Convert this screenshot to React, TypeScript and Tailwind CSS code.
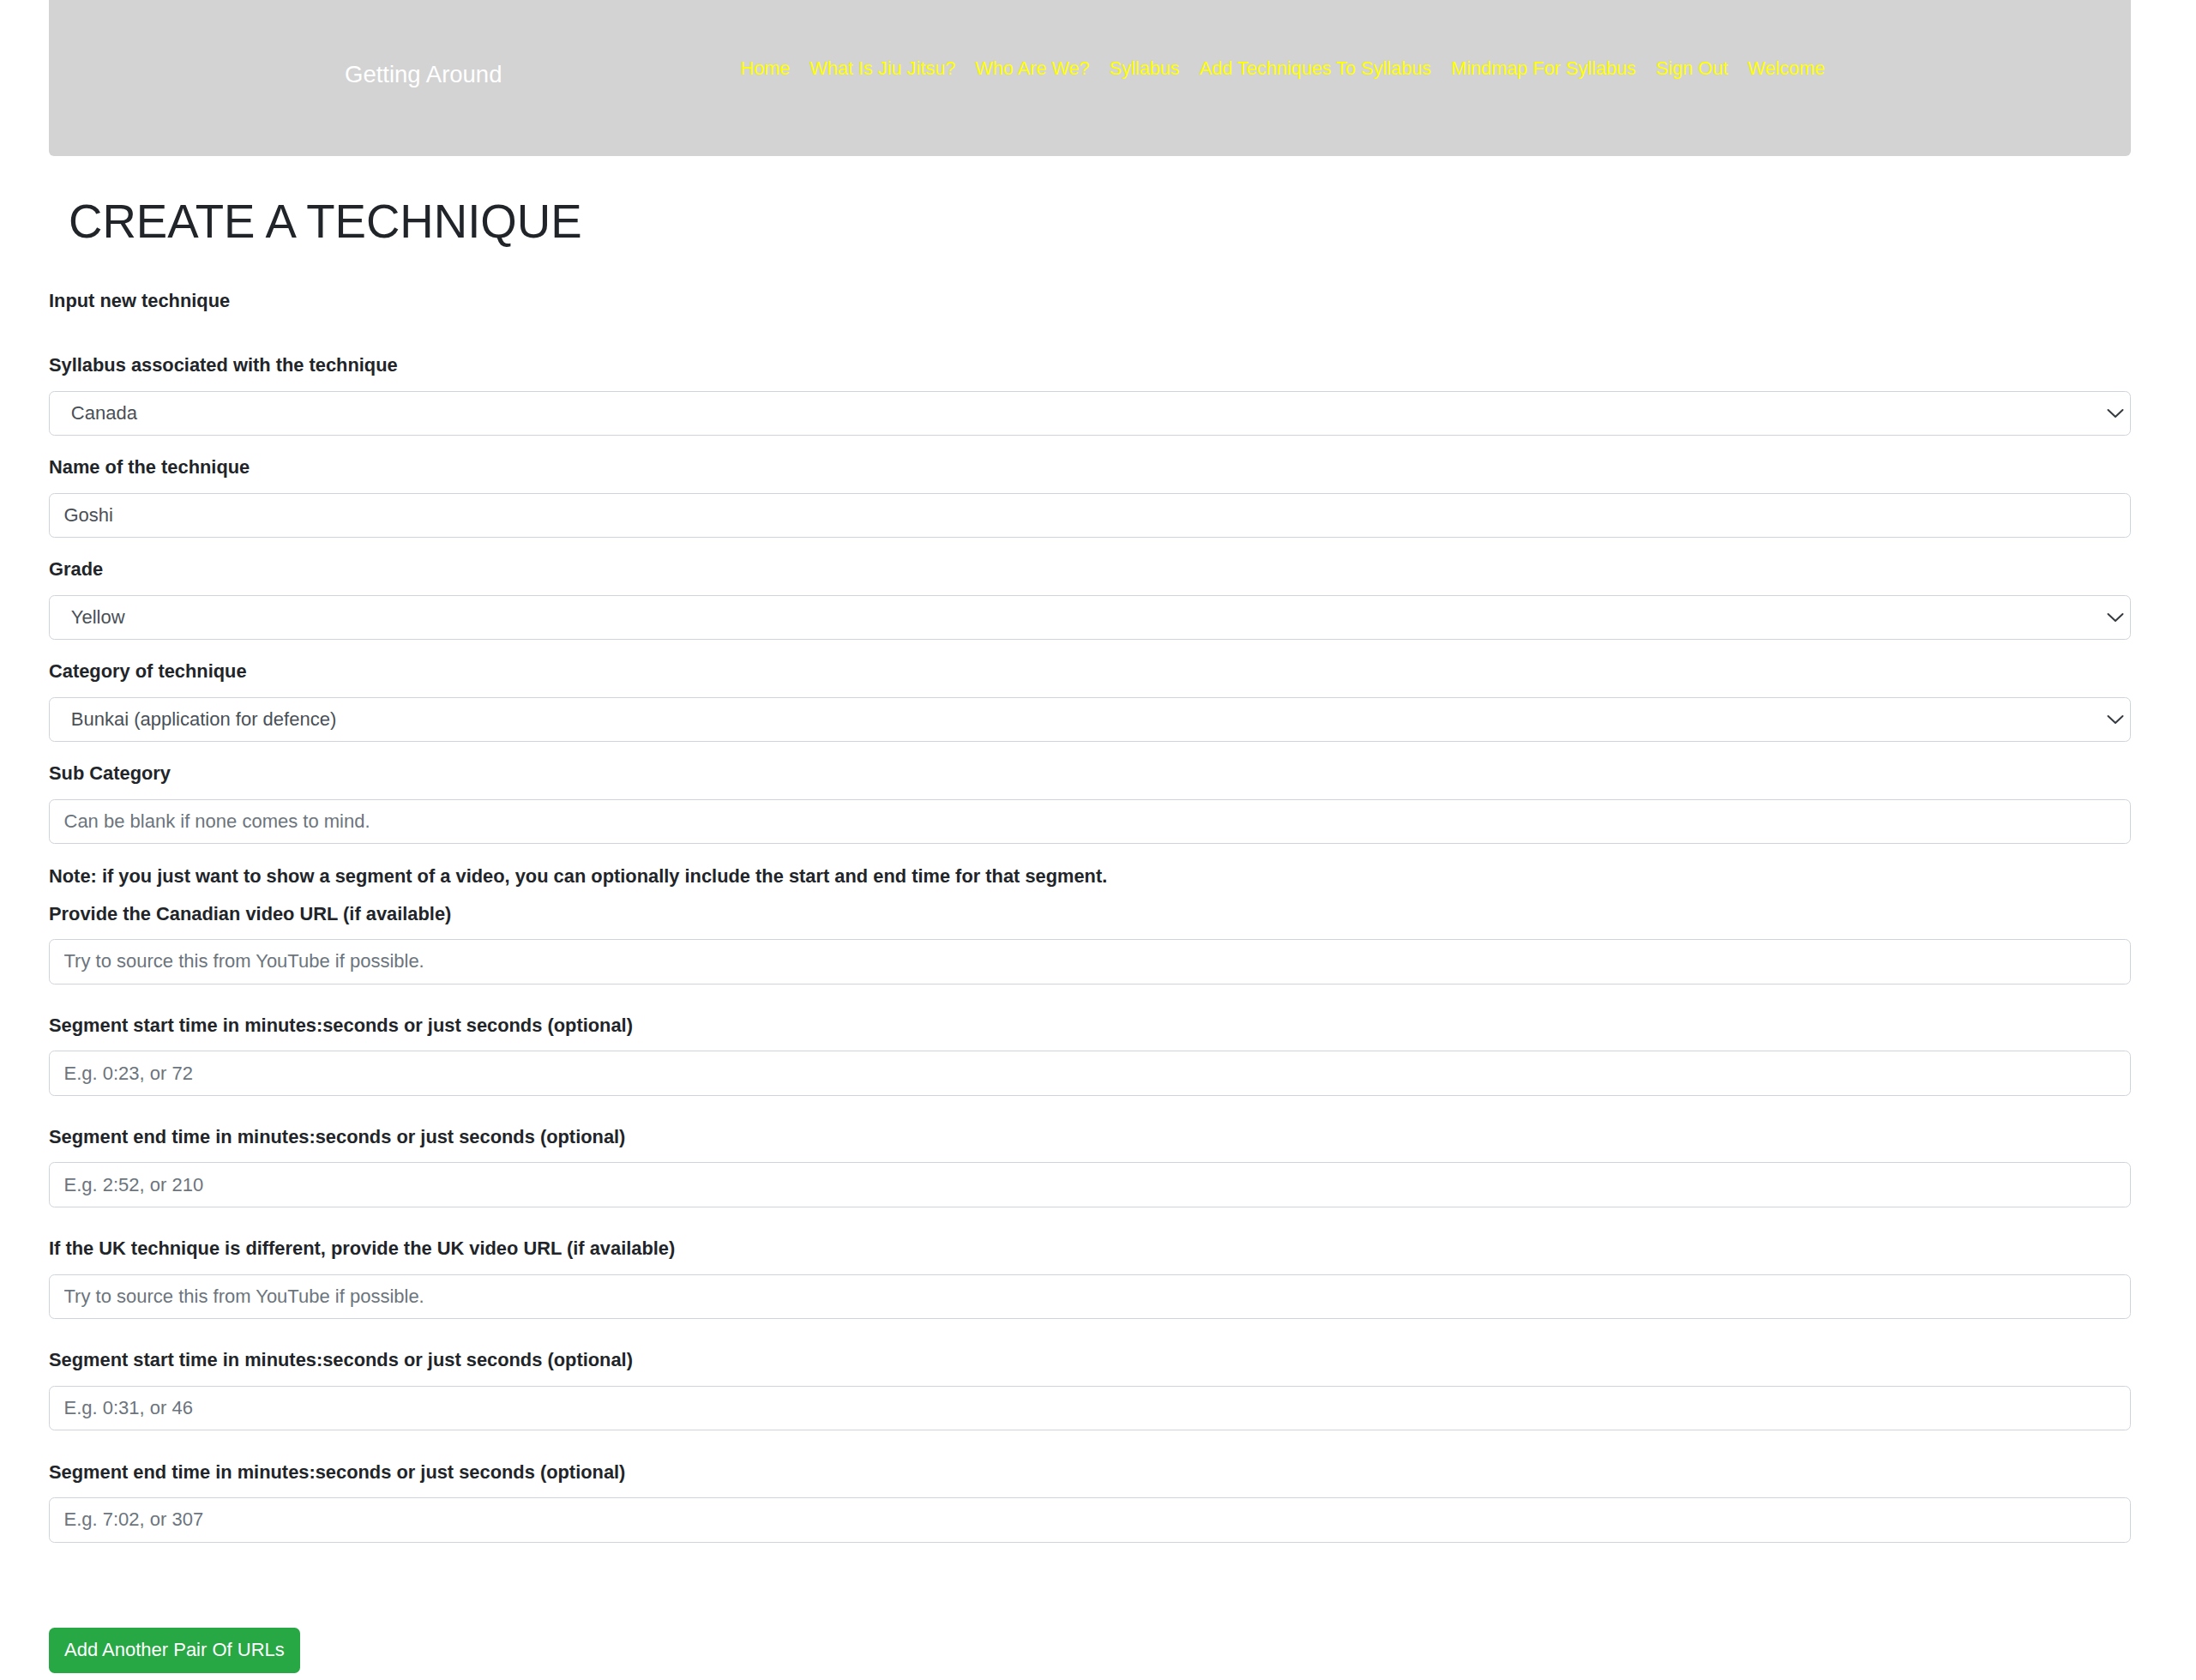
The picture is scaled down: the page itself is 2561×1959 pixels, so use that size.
import React from 'react';

const navLinks = [
  'Home',
  'What Is Jiu Jitsu?',
  'Who Are We?',
  'Syllabus',
  'Add Techniques To Syllabus',
  'Mindmap For Syllabus',
  'Sign Out',
  'Welcome',
];

const urlFields = [
  { label: 'Provide the Canadian video URL (if available)', placeholder: 'Try to source this from YouTube if possible.' },
  { label: 'Segment start time in minutes:seconds or just seconds (optional)', placeholder: 'E.g. 0:23, or 72' },
  { label: 'Segment end time in minutes:seconds or just seconds (optional)', placeholder: 'E.g. 2:52, or 210' },
  { label: 'If the UK technique is different, provide the UK video URL (if available)', placeholder: 'Try to source this from YouTube if possible.' },
  { label: 'Segment start time in minutes:seconds or just seconds (optional)', placeholder: 'E.g. 0:31, or 46' },
  { label: 'Segment end time in minutes:seconds or just seconds (optional)', placeholder: 'E.g. 7:02, or 307' },
];

const labelCls = 'block text-[21.85px] leading-[32.5px] font-bold text-[#212529] mb-[13px]';
const inputCls =
  'block w-full h-[52.5px] border-[1.5px] border-[#ced4da] rounded-[6.5px] bg-white pl-[16.5px] pr-4 text-[22px] text-[#495057] placeholder:text-[#6c757d] outline-none';

const Chevron = () => (
  <svg
    className="absolute right-[8px] top-1/2 -translate-y-1/2 pointer-events-none"
    width="20"
    height="11"
    viewBox="0 0 20 11"
    fill="none"
  >
    <path d="M1.5 1.5 L10 9.5 L18.5 1.5" stroke="#343a40" strokeWidth="2" strokeLinecap="round" strokeLinejoin="round" />
  </svg>
);

const SelectField = ({ label, value }: { label: string; value: string }) => (
  <div className="mb-[21px]">
    <label className={labelCls}>{label}</label>
    <div className="relative">
      <select
        defaultValue={value}
        className="block w-full h-[52.5px] appearance-none border-[1.5px] border-[#ced4da] rounded-[6.5px] bg-white pl-[24.8px] pr-10 text-[22px] text-[#495057] outline-none"
      >
        <option value={value}>{value}</option>
      </select>
      <Chevron />
    </div>
  </div>
);

const App = () => {
  return (
    <div className="min-h-screen bg-white font-['Liberation_Sans',Arial,sans-serif]">
      <div className="ml-[57px] w-[2428px]">
        <nav className="h-[182px] bg-[#d3d3d3] rounded-b-[6px] flex items-start pt-[69px]">
          <span className="ml-[345px] mt-[4px] text-[27.5px] leading-none text-white">Getting Around</span>
          <ul className="ml-[278px] flex gap-[23px]">
            {navLinks.map((link) => (
              <li key={link}>
                <a href="#" className="text-[21.7px] leading-none text-[#ffff00]">
                  {link}
                </a>
              </li>
            ))}
          </ul>
        </nav>

        <h1 className="mt-[44.5px] pl-[23px] text-[54.6px] leading-[63.6px] font-normal text-[#212529]">
          CREATE A TECHNIQUE
        </h1>

        <form className="mt-[45px]" onSubmit={(e) => e.preventDefault()}>
          <p className="text-[21.85px] leading-[32.5px] font-bold text-[#212529] mb-[42.5px]">Input new technique</p>

          <SelectField label="Syllabus associated with the technique" value="Canada" />

          <div className="mb-[21px]">
            <label className={labelCls}>Name of the technique</label>
            <input type="text" defaultValue="Goshi" className={inputCls} />
          </div>

          <SelectField label="Grade" value="Yellow" />
          <SelectField label="Category of technique" value="Bunkai (application for defence)" />

          <div className="mb-[22px]">
            <label className={labelCls}>Sub Category</label>
            <input type="text" placeholder="Can be blank if none comes to mind." className={inputCls} />
          </div>

          <p className="text-[21.85px] leading-[32.5px] font-bold text-[#212529] mb-[11px]">
            Note: if you just want to show a segment of a video, you can optionally include the start and end time for that segment.
          </p>

          {urlFields.map((field, i) => (
            <div key={i} className={i < urlFields.length - 1 ? 'mb-[32.2px]' : ''}>
              <label className={labelCls}>{field.label}</label>
              <input type="text" placeholder={field.placeholder} className={inputCls} />
            </div>
          ))}

          <button
            type="button"
            className="mt-[99px] h-[53px] px-[18px] rounded-[6.5px] bg-[#28a745] text-white text-[22px] leading-none"
          >
            Add Another Pair Of URLs
          </button>
        </form>
      </div>
    </div>
  );
};

export default App;
